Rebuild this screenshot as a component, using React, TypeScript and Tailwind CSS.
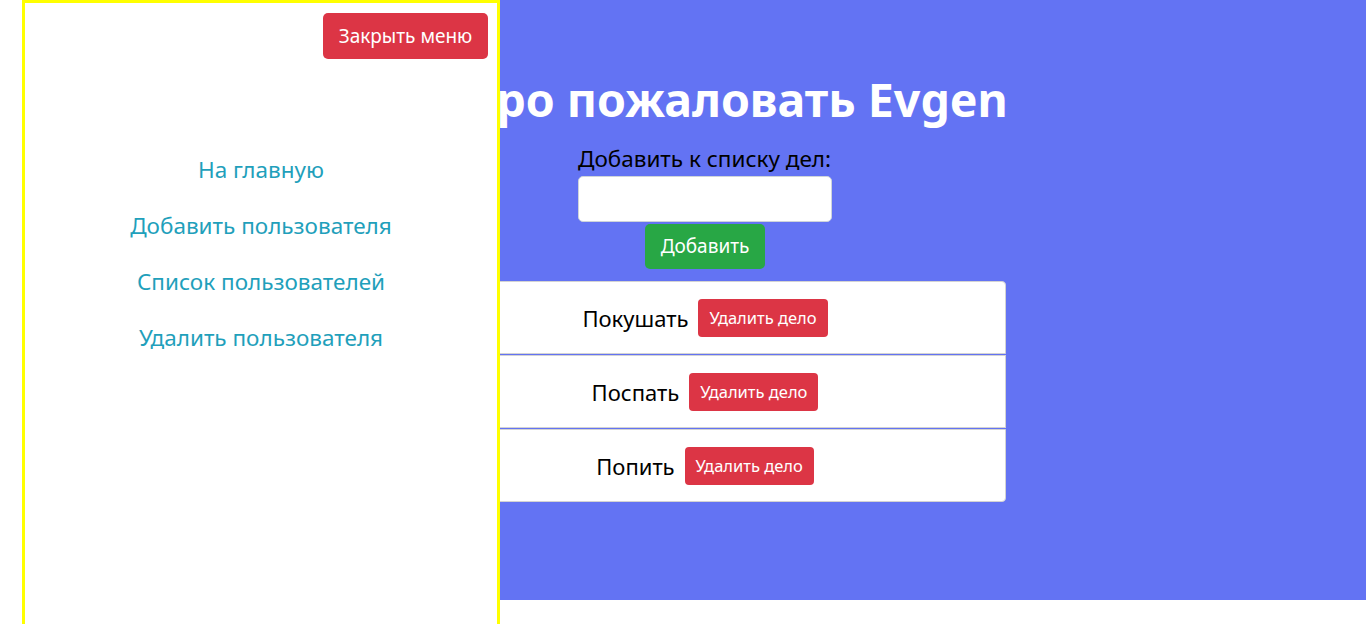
import { useState } from "react";

const font = { fontFamily: '"Noto Sans", "Open Sans", sans-serif' };

const initialTodos = ["Покушать", "Поспать", "Попить"];

const links = ["На главную", "Добавить пользователя", "Список пользователей", "Удалить пользователя"];

export default function App() {
  const [todos, setTodos] = useState(initialTodos);
  const [text, setText] = useState("");
  const [menuOpen, setMenuOpen] = useState(true);

  const addTodo = () => {
    if (!text.trim()) return;
    setTodos([...todos, text.trim()]);
    setText("");
  };

  return (
    <div className="relative w-[1368px] h-[624px] overflow-hidden bg-white" style={font}>
      <div className="ml-[44px] w-[1322px] h-[600px] bg-[#6373f3] flex flex-col items-center pt-[72px]">
        <h1 className="text-[46.5px] leading-[55px] font-bold text-white">Добро пожаловать Evgen</h1>

        <div className="w-[254px] flex flex-col">
          <label className="mt-[15px] text-[22.5px] leading-[34px] text-black whitespace-nowrap">Добавить к списку дел:</label>
          <input
            value={text}
            onChange={(e) => setText(e.target.value)}
            className="h-[46px] w-[254px] rounded-[5px] border border-[#ced4da] bg-white px-3 text-[20px] outline-none"
          />
        </div>
        <button
          onClick={addTodo}
          className="mt-[2px] h-[45px] w-[120px] rounded-[5px] bg-[#28a745] text-[19px] text-white"
        >
          Добавить
        </button>

        <div className="mt-[12px] w-[602px] flex flex-col gap-[1px]">
          {todos.map((t, i) => (
            <div
              key={i}
              className={`h-[73px] bg-white border border-[#d3d3d3] flex items-center justify-center gap-[10px] pt-[1px] ${
                i === 0 ? "rounded-t-[4px]" : ""
              } ${i === todos.length - 1 ? "rounded-b-[4px]" : ""}`}
            >
              <span className="text-[22px] text-black">{t}</span>
              <button
                onClick={() => setTodos(todos.filter((_, j) => j !== i))}
                className="h-[38px] px-[11px] rounded-[4px] bg-[#dc3545] text-[16.5px] text-white"
              >
                Удалить дело
              </button>
            </div>
          ))}
        </div>
      </div>

      {menuOpen && (
        <div className="absolute left-[22px] top-0 w-[478px] h-[640px] bg-white border-[3px] border-[#ffff00] flex flex-col">
          <div className="flex justify-end pt-[10px] pr-[9px]">
            <button
              onClick={() => setMenuOpen(false)}
              className="h-[46px] w-[165px] rounded-[5px] bg-[#dc3545] text-[19px] text-white"
            >
              Закрыть меню
            </button>
          </div>
          <nav className="mt-[94px] flex flex-col items-center gap-[22px]">
            {links.map((l) => (
              <a key={l} href="#" className="text-[22.5px] leading-[34px] text-[#1fa0bb]">
                {l}
              </a>
            ))}
          </nav>
        </div>
      )}
    </div>
  );
}
